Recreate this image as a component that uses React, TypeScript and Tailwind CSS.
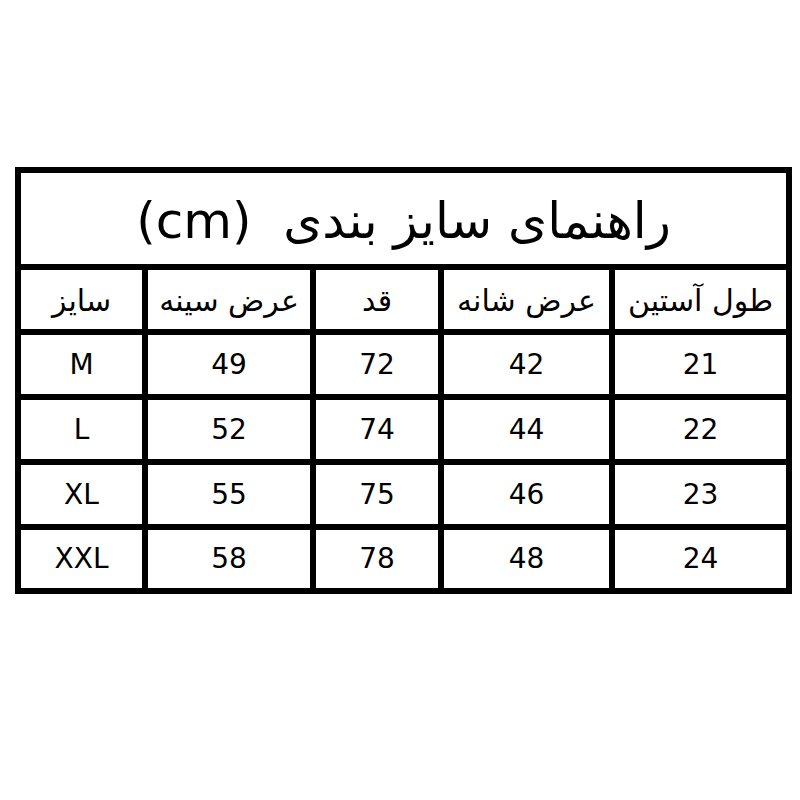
const headers = ["سایز", "عرض سینه", "قد", "عرض شانه", "طول آستین"];

const rows = [
  ["M", "49", "72", "42", "21"],
  ["L", "52", "74", "44", "22"],
  ["XL", "55", "75", "46", "23"],
  ["XXL", "58", "78", "48", "24"],
];

export default function App() {
  return (
    <div className="min-h-[800px] w-[800px] bg-white pl-[15px] pt-[167px] font-['DejaVu_Sans',sans-serif] text-black">
      <div className="grid w-[777px] grid-cols-[121px_162px_122px_165px_171px] grid-rows-[91px_59px_59px_59px_59px_58px] gap-[6px] bg-black p-[6px]">
        {/* title */}
        <div
          dir="rtl"
          className="col-span-5 flex items-center justify-center whitespace-pre bg-white pt-[4px] text-[50px] leading-none"
        >
          راهنمای سایز بندی  (cm)
        </div>

        {/* header row */}
        {headers.map((h) => (
          <div
            key={h}
            dir="rtl"
            className="flex items-center justify-center bg-white pt-[2px] text-[30px] leading-none"
          >
            {h}
          </div>
        ))}

        {/* data */}
        {rows.map((r) =>
          r.map((v, i) => (
            <div
              key={r[0] + i}
              className="flex items-center justify-center bg-white text-[28px]"
            >
              {v}
            </div>
          ))
        )}
      </div>
    </div>
  );
}
